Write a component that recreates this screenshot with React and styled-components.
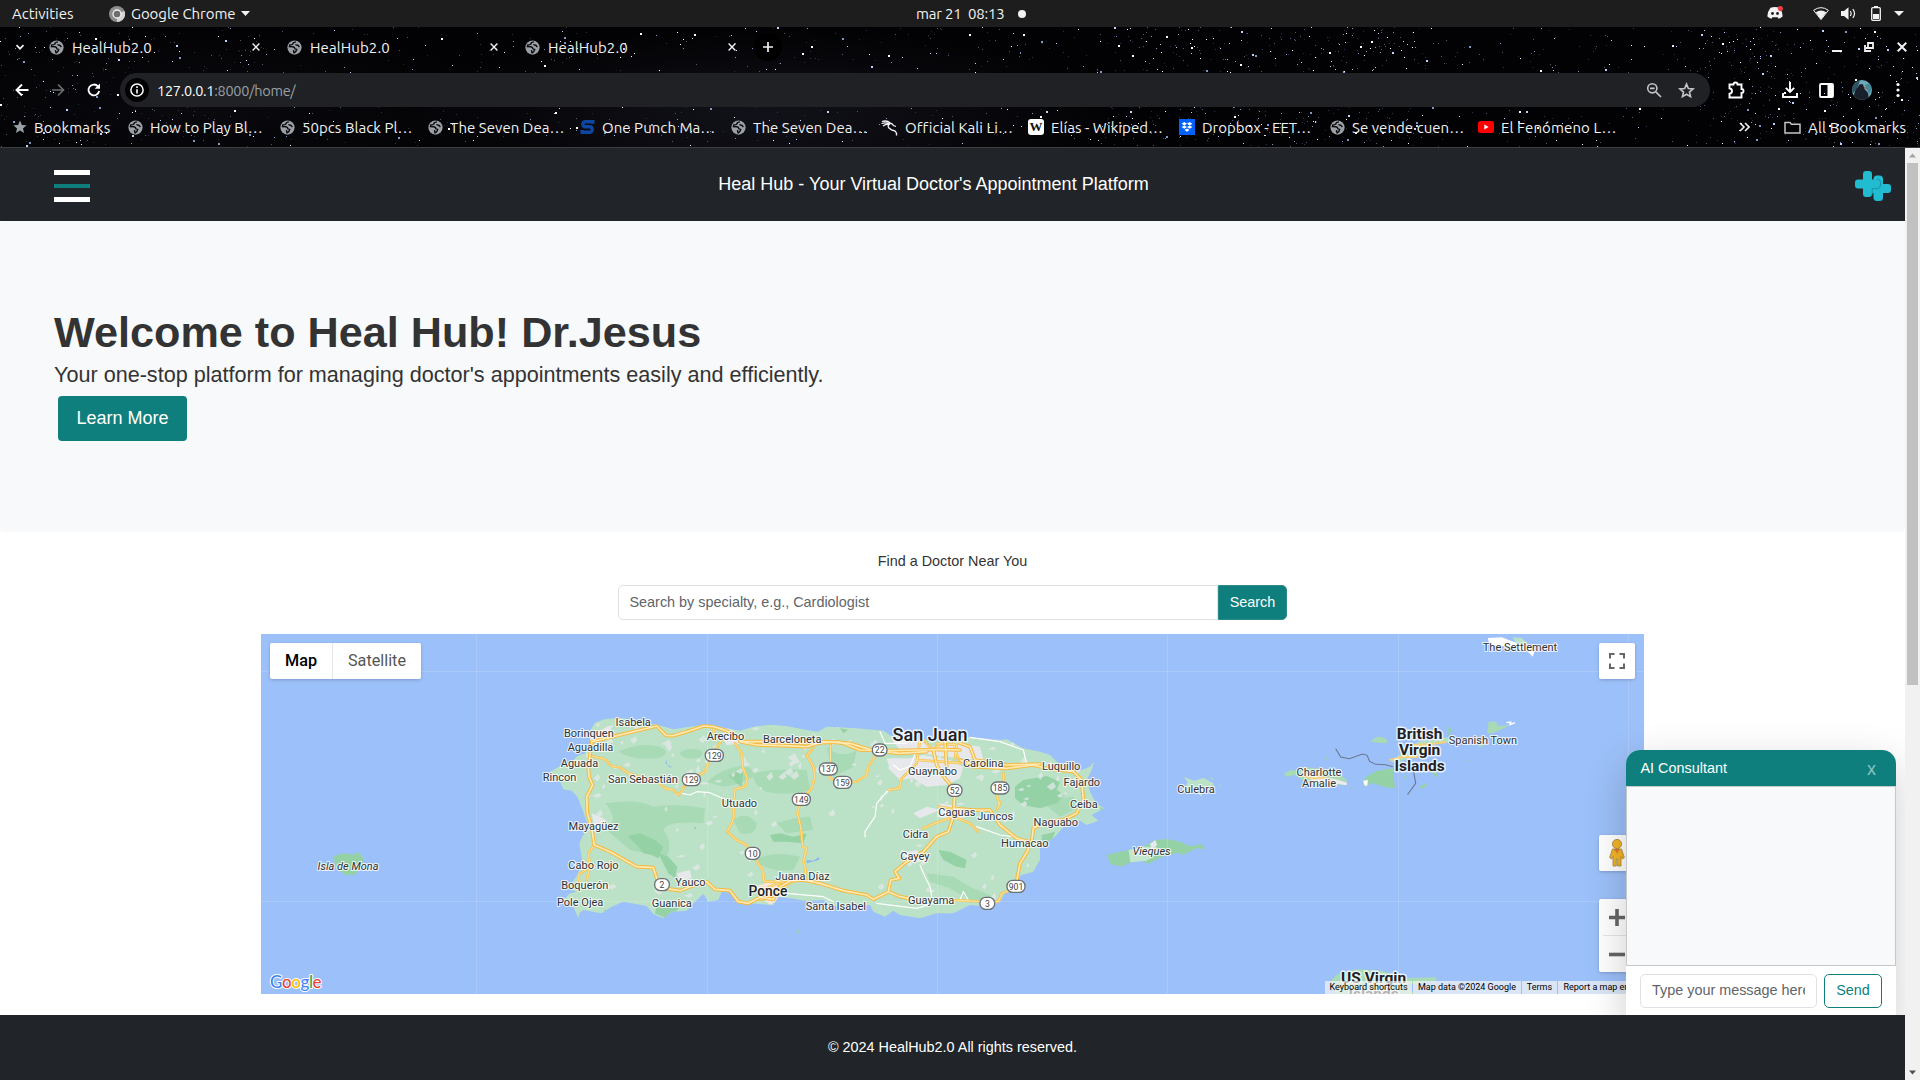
import React from 'react';
import styled, { createGlobalStyle, css } from 'styled-components';

const GlobalStyle = createGlobalStyle`
  * { box-sizing: border-box; }
  html, body { margin: 0; padding: 0; background: #fff; overflow: hidden; }
  body { font-family: "Liberation Sans", Arial, sans-serif; font-size: 14.4px; color: #212529; }
  p, h1, h2 { margin: 0; }
`;

const uiFont = '"Ubuntu", "Noto Sans", "Open Sans", sans-serif';
const teal = '#0f7f7e';

/* ---------- seeded random, for the star field and land texture ---------- */
function makeRandom(seed) {
  let s = seed;
  return () => {
    s = (s * 1664525 + 1013904223) % 4294967296;
    return s / 4294967296;
  };
}

/* ---------- shell ---------- */
const Screen = styled.div`
  width: 1920px;
  height: 1080px;
  display: flex;
  flex-direction: column;
  overflow: hidden;
`;

const SystemBar = styled.div`
  height: 27px;
  flex: none;
  background: #1d1d1d;
  color: #f2f2f2;
  font: 15px ${uiFont};
  display: grid;
  grid-template-columns: 916px 1fr auto;
  align-items: center;
`;
const SystemLeft = styled.div`
  display: flex;
  align-items: center;
  padding-left: 12px;
`;
const Activities = styled.span`
  width: 97px;
`;
const AppName = styled.span`
  margin-left: 6px;
  width: 110px;
  white-space: nowrap;
  letter-spacing: -0.05px;
`;
const Clock = styled.div`
  display: flex;
  align-items: center;
  white-space: pre;
  letter-spacing: -0.2px;
`;
const ClockText = styled.span`
  width: 102px;
`;
const Dot = styled.span`
  width: 8px;
  height: 8px;
  border-radius: 50%;
  background: #f2f2f2;
`;
const Tray = styled.div`
  display: flex;
  align-items: center;
  padding: 0 16px 1px 0;
`;
const TrayIcon = styled.svg`
  display: block;
  margin-right: ${(p) => p.$gap || 0}px;
`;

const Chrome = styled.header`
  position: relative;
  height: 121px;
  flex: none;
  background: #020204;
  border-bottom: 1px solid #3c3d40;
  color: #f1f1f1;
  font: 15px ${uiFont};
`;
const Sky = styled.svg`
  position: absolute;
  inset: 0;
`;
const ChromeRows = styled.div`
  position: relative;
  display: flex;
  flex-direction: column;
`;
const TabRow = styled.div`
  height: 46px;
  padding: 0 13px 6px 13px;
  display: flex;
  align-items: center;
`;
const Tab = styled.div`
  width: ${(p) => (p.$last ? 229 : 238)}px;
  display: flex;
  align-items: center;
`;
const TabTitle = styled.span`
  margin-left: 8px;
  width: 180px;
  letter-spacing: 0.1px;
`;
const NewTab = styled.div`
  width: 28px;
  height: 28px;
  border-radius: 50%;
  background: #000;
  display: flex;
  align-items: center;
  justify-content: center;
`;
const Grow = styled.div`
  flex: 1;
`;
const Icon = styled.svg`
  display: block;
  flex: none;
  margin-right: ${(p) => p.$gap || 0}px;
`;
const ToolRow = styled.div`
  height: 34px;
  display: flex;
  align-items: center;
  padding: 0 16px 0 14px;
`;
const Omnibox = styled.div`
  width: 1590px;
  height: 34px;
  border-radius: 17px;
  background: #202124;
  display: flex;
  align-items: center;
  padding: 0 15px 0 5px;
`;
const InfoBadge = styled.div`
  width: 24px;
  height: 24px;
  border-radius: 50%;
  background: #020203;
  display: flex;
  align-items: center;
  justify-content: center;
  margin-right: 8px;
`;
const Url = styled.span`
  color: #9aa0a6;
  font-size: 14.5px;
  letter-spacing: -0.28px;
  flex: 1;
  b { font-weight: 400; color: #fff; }
`;
const BookmarkRow = styled.div`
  height: 40px;
  display: flex;
  align-items: center;
  padding-left: 13px;
`;
const Bookmark = styled.div`
  width: ${(p) => p.$w}px;
  display: flex;
  align-items: center;
  white-space: nowrap;
  letter-spacing: ${(p) => p.$ls || 0}px;
  gap: 7px;
`;

/* ---------- page ---------- */
const Viewport = styled.div`
  flex: 1;
  display: flex;
  min-height: 0;
`;
const Page = styled.div`
  position: relative;
  width: 1905px;
  display: flex;
  flex-direction: column;
  overflow: hidden;
`;
const NavBar = styled.nav`
  height: 73px;
  flex: none;
  background: #212529;
  display: grid;
  grid-template-columns: 54px 36px 1fr 36px 14px;
  align-items: center;
`;
const Burger = styled.div`
  grid-column: 2;
  display: flex;
  flex-direction: column;
  gap: 9px;
  padding-top: 2px;
`;
const BurgerLine = styled.span`
  height: ${(p) => (p.$accent ? 4 : 5)}px;
  background: ${(p) => (p.$accent ? teal : '#fff')};
`;
const NavTitle = styled.div`
  color: #fff;
  font-size: 18px;
  text-align: center;
  padding-right: 78px;
`;
const NavLogo = styled.svg`
  display: block;
  margin-top: 2px;
`;
const Hero = styled.section`
  height: 311px;
  flex: none;
  background: #f8f9fb;
  border-radius: 4px;
  display: flex;
  flex-direction: column;
  align-items: flex-start;
  padding: 85px 54px 0;
  color: #333;
`;
const HeroTitle = styled.h1`
  font-size: 43.2px;
  font-weight: 700;
  line-height: 52px;
`;
const HeroText = styled.p`
  font-size: 21.6px;
  line-height: 32px;
  padding-top: 1px;
`;
const LearnMore = styled.button`
  margin: 5px 0 0 4px;
  width: 129px;
  height: 45px;
  border: 0;
  border-radius: 4px;
  background: ${teal};
  color: #fff;
  font: 18px "Liberation Sans", Arial, sans-serif;
  padding: 0;
`;
const Finder = styled.section`
  flex: 1;
  display: flex;
  flex-direction: column;
  align-items: center;
`;
const FinderTitle = styled.h2`
  font-size: 14.4px;
  font-weight: 400;
  color: #333;
  line-height: 22px;
  margin-top: 18px;
`;
const SearchGroup = styled.div`
  display: flex;
  margin-top: 13px;
`;
const fieldBase = css`
  border: 1px solid #dee2e6;
  background: #fff;
  color: #212529;
  font: 14.4px "Liberation Sans", Arial, sans-serif;
  &::placeholder { color: #5f646a; opacity: 1; }
`;
const SearchInput = styled.input`
  ${fieldBase}
  width: 600px;
  height: 35px;
  border-radius: 5px 0 0 5px;
  padding: 0 10px 2px 10.5px;
`;
const SearchButton = styled.button`
  width: 69px;
  height: 35px;
  border: 1px solid #2b8b8a;
  border-radius: 0 5px 5px 0;
  background: ${teal};
  color: #fff;
  font: 14.4px "Liberation Sans", Arial, sans-serif;
  padding: 0 0 2px;
`;
const MapBox = styled.div`
  position: relative;
  margin-top: 14px;
  width: 1383px;
  height: 360px;
  overflow: hidden;
  background: #9cc0f9;
  font-family: Roboto, sans-serif;
`;
const MapArt = styled.svg`
  display: block;
`;
const control = css`
  position: absolute;
  background: #fff;
  border-radius: 2px;
  box-shadow: 0 1px 4px -1px rgba(0, 0, 0, 0.3);
`;
const TypeSwitch = styled.div`
  ${control}
  left: 9px;
  top: 9px;
  height: 36px;
  display: flex;
`;
const TypeOption = styled.div`
  width: ${(p) => p.$w}px;
  display: flex;
  align-items: center;
  justify-content: center;
  padding-bottom: 1px;
  font-size: 16.2px;
  color: ${(p) => (p.$on ? '#000' : '#565656')};
  font-weight: ${(p) => (p.$on ? 500 : 400)};
  border-right: ${(p) => (p.$on ? '1px solid #e6e6e6' : '0')};
`;
const MapButton = styled.div`
  ${control}
  right: 9px;
  top: ${(p) => p.$top}px;
  width: 36px;
  height: ${(p) => p.$h || 36}px;
  display: flex;
  flex-direction: column;
  align-items: center;
  justify-content: center;
`;
const ZoomHalf = styled.div`
  height: 36px;
  display: flex;
  align-items: center;
`;
const ZoomDivider = styled.span`
  width: 28px;
  height: 1px;
  background: #e6e6e6;
`;
const Legal = styled.div`
  position: absolute;
  right: 0;
  bottom: 0;
  height: 13px;
  display: flex;
  gap: 1px;
  font-size: 9px;
  line-height: 12px;
  color: #000;
`;
const LegalItem = styled.span`
  width: ${(p) => p.$w}px;
  background: rgba(245, 245, 245, 0.7);
  text-align: center;
  white-space: nowrap;
`;
const Footer = styled.footer`
  position: relative;
  z-index: 2;
  height: 65px;
  flex: none;
  background: #212529;
  color: #fff;
  display: flex;
  align-items: center;
  justify-content: center;
  padding-bottom: 1px;
`;

/* ---------- chat widget ---------- */
const Chat = styled.aside`
  position: absolute;
  z-index: 1;
  right: 9px;
  bottom: 58px;
  width: 270px;
  height: 272px;
  border-radius: 14px 14px 0 0;
  background: #fff;
  box-shadow: 0 14px 43px rgba(0, 0, 0, 0.2);
  display: flex;
  flex-direction: column;
`;
const ChatHead = styled.div`
  height: 36px;
  border-radius: 14px 14px 0 0;
  background: ${teal};
  color: #fff;
  display: flex;
  align-items: center;
  justify-content: space-between;
  padding: 0 20px 0 14.5px;
`;
const ChatClose = styled.span`
  color: #8cc3c3;
  padding-top: 2px;
  font-size: 18px;
`;
const ChatBody = styled.div`
  height: 180px;
  border: 1px solid #c6c8ca;
  background: #f8f9fb;
`;
const ChatForm = styled.div`
  display: flex;
  gap: 7px;
  padding: 8px 14px;
`;
const ChatInput = styled.input`
  ${fieldBase}
  width: 177px;
  height: 34px;
  border-radius: 5px;
  padding: 0 11px 2px;
`;
const SendButton = styled.button`
  width: 58px;
  height: 34px;
  border: 1px solid ${teal};
  border-radius: 5px;
  background: #fff;
  color: ${teal};
  font: 14.4px "Liberation Sans", Arial, sans-serif;
  padding: 0 0 3px;
`;

/* ---------- scrollbar ---------- */
const ScrollTrack = styled.div`
  width: 15px;
  background: #f1f1f1;
  display: flex;
  flex-direction: column;
  align-items: center;
`;
const ScrollThumb = styled.div`
  width: 11px;
  height: 522px;
  background: #c1c1c1;
`;

/* ---------- small icons ---------- */
const Globe = () => (
  <Icon width="15" height="15" viewBox="0 0 16 16">
    <circle cx="8" cy="8" r="7.6" fill="#9aa0a6" />
    <path
      d="M9.500 2Q6 2.600 6.200 4.400Q5.200 5.400 3 5.400L2.600 7L6.400 7.200Q8.400 7.600 8.400 9.400L10.400 10Q10 12.200 7.600 13.800Q6.800 12.600 7 10.800M9.200 4.600Q9.800 6 11.600 5.600L13.200 7.400"
      fill="none" stroke="#0a0a0d" strokeWidth="1.5"
    />
  </Icon>
);
const Cross = ({ size = 8, w = 1.4 }) => (
  <Icon width={size} height={size} viewBox="0 0 8 8">
    <path d="M.6.6 7.4 7.4M7.4.6.6 7.4" stroke="#f1f1f1" strokeWidth={w} />
  </Icon>
);
const StarSolid = () => (
  <Icon width="14" height="14" viewBox="0 0 24 24">
    <path fill="#9aa0a6" d="M12 1l3.2 7.4 8 .7-6.1 5.3 1.9 7.9L12 18l-7 4.300 1.900-7.900L.8 9.100l8-.7z" />
  </Icon>
);
const SiteS = () => (
  <Icon width="15" height="16" viewBox="0 0 14 16">
    <path d="M12.300 4.800V2.800H4.800Q2.400 2.800 2.400 5.200T4.800 7.800H9.200Q11.700 7.800 11.700 10.600T9.200 13.200H1.700V11" fill="none" stroke="#0d47a1" strokeWidth="3.400" />
  </Icon>
);
const Kali = () => (
  <Icon width="17" height="17" viewBox="0 0 17 17">
    <path d="M1 2.500Q6 1 9.500 4.200M.5 4.500Q5 3 8.500 5M2 7Q5 4.600 9 5.200M9 4.300Q11 4 12.500 6.500L15 7.500M9 5Q5.800 6.800 8 9T14 12Q16 13.500 15.500 16.500" fill="none" stroke="#f5f5f5" strokeWidth="1.300" />
  </Icon>
);
const WikiMark = styled.span`
  width: 16px;
  height: 16px;
  flex: none;
  border-radius: 3px;
  background: #fff;
  color: #111;
  font: 700 13px/16px "Liberation Serif", serif;
  text-align: center;
  letter-spacing: 0;
  display: block;
`;
const Dropbox = () => (
  <Icon width="16" height="16" viewBox="0 0 16 16">
    <rect width="16" height="16" fill="#0061fe" />
    <path fill="#fff" d="M5.300 3 8 4.700 5.300 6.400 2.600 4.700zM10.700 3l2.700 1.700-2.700 1.700L8 4.700zM5.300 6.400 8 8.100 5.300 9.800 2.600 8.100zM10.700 6.400l2.700 1.700-2.700 1.700L8 8.100zM8 9.400l2.500 1.600L8 12.700 5.500 11z" />
  </Icon>
);
const YouTube = () => (
  <Icon width="16" height="12" viewBox="0 0 16 12">
    <rect width="16" height="12" rx="2.500" fill="#f00" />
    <path fill="#fff" d="M6.300 3.400v5.200L10.600 6z" />
  </Icon>
);

const bookmarks = [
  { label: 'Bookmarks', icon: <StarSolid />, w: 115, ls: 0.15 },
  { label: 'How to Play Bl…', icon: <Globe />, w: 152, ls: 0.05 },
  { label: '50pcs Black Pl…', icon: <Globe />, w: 148, ls: 0.05 },
  { label: 'The Seven Dea…', icon: <Globe />, w: 152, ls: 0.05 },
  { label: 'One Punch Ma…', icon: <SiteS />, w: 151, ls: 0.05 },
  { label: 'The Seven Dea…', icon: <Globe />, w: 150, ls: 0.05 },
  { label: 'Official Kali Li…', icon: <Kali />, w: 147, ls: 0.05 },
  { label: 'Elías - Wikiped…', icon: <WikiMark>W</WikiMark>, w: 151, ls: 0.05 },
  { label: 'Dropbox - EET…', icon: <Dropbox />, w: 151, ls: 0 },
  { label: 'Se vende cuen…', icon: <Globe />, w: 148, ls: 0.05 },
  { label: 'El Fenómeno L…', icon: <YouTube />, w: 260, ls: 0.1 },
];

/* ---------- star field ---------- */
const stars = (() => {
  const r = makeRandom(77);
  const out = [];
  const tones = ['#ffffff', '#bcd4ff', '#7f98c8', '#4c5878', '#2c3348', '#2c3348', '#4f5b78', '#33363f', '#262a36'];
  const add = (x0, x1, n) => {
    for (let i = 0; i < n; i += 1) {
      const big = r() > 0.92;
      out.push({
        x: Math.floor(x0 + r() * (x1 - x0)),
        y: Math.floor(r() * 120),
        s: big ? 2 : 1,
        c: big ? tones[Math.floor(r() * 3)] : tones[Math.floor(r() * tones.length)],
      });
    }
  };
  add(0, 260, 300);
  add(260, 760, 280);
  add(760, 1100, 240);
  add(1100, 1420, 620);
  add(1420, 1780, 240);
  add(1700, 1920, 300);
  return out;
})();

const StarField = () => (
  <Sky width="1920" height="120" viewBox="0 0 1920 120">
    <defs>
      <radialGradient id="haze">
        <stop offset="0" stopColor="#14141d" stopOpacity=".85" />
        <stop offset="1" stopColor="#14141d" stopOpacity="0" />
      </radialGradient>
    </defs>
    <ellipse cx="760" cy="90" rx="360" ry="90" fill="url(#haze)" />
    <ellipse cx="200" cy="80" rx="320" ry="80" fill="url(#haze)" opacity=".5" />
    {stars.map((s, i) => (
      <rect key={i} x={s.x} y={s.y} width={s.s} height={s.s} fill={s.c} />
    ))}
  </Sky>
);

/* ---------- map ---------- */
const island =
  'M30 215L72 192L90 190L112 168L135 160L152 135L148 95L165 68L195 57L245 54L300 66L350 74L400 88L480 76L520 78L600 92L640 80L690 74L740 78L800 90L835 95L860 80L940 84L1030 92L1060 112L1150 118L1210 125L1260 112L1290 112L1380 120L1400 118L1450 145L1500 155L1530 165L1560 195L1600 215L1625 210L1650 200L1662 185L1655 210L1640 240L1650 275L1668 310L1692 325L1655 345L1675 362L1640 375L1620 362L1580 370L1545 410L1500 440L1500 480L1480 515L1445 525L1400 570L1380 605L1345 620L1290 615L1240 640L1190 640L1140 655L1080 645L1060 632L1035 650L1000 635L990 615L945 615L880 618L850 600L800 603L760 596L715 590L700 615L660 612L620 610L590 600L575 578L545 575L535 600L505 605L490 582L465 605L440 632L395 635L370 655L340 642L320 618L250 605L215 620L185 640L130 630L118 640L115 654L102 625L92 615L70 600L90 580L110 575L72 562L95 548L108 532L128 490L118 430L130 405L145 380L130 335L112 290L95 272L70 268L58 240Z';

const darkPatches = [
  'M235 155Q300 125 360 140Q400 160 350 175Q270 180 235 155',
  'M418 160Q440 140 480 150Q500 165 470 175Q430 180 418 160',
  'M500 245Q540 210 590 200Q640 190 640 230Q600 255 550 260Z',
  'M640 220Q700 205 800 210L810 270Q730 290 680 275Q640 260 640 220',
  'M195 310Q290 295 340 320Q420 310 495 325L490 370Q380 360 370 390Q400 430 380 470L270 450L200 390Q240 360 195 310',
  'M580 360Q620 330 650 370Q650 410 600 400Z',
  'M640 480Q700 450 780 470L760 510Q690 520 640 480',
  'M710 370Q770 350 810 350L820 390L740 400Z',
  'M860 140Q900 180 950 150L940 200L880 230Z',
  'M1500 300L1600 290L1620 320L1560 350Z',
  'M1160 520L1240 530L1290 560L1360 590L1350 605L1290 600L1230 565L1170 545Z',
];
const forest = [
  'M262 408L300 400L345 420L370 440L355 475L335 465L310 460L285 430Z',
  'M355 460L385 470L412 500L405 535L385 520Z',
  'M1425 260L1450 240L1520 228L1560 245L1550 270L1575 285L1550 310L1500 325L1450 315L1425 295Z',
  'M565 225L610 210L605 260L590 250Z',
  'M690 405L720 400L760 410L800 400L790 430L740 425L700 425Z',
  'M1195 450L1230 455L1280 480L1275 505L1250 500L1210 480Z',
  'M1505 405L1545 395L1535 425L1505 420Z',
  'M350 615L400 605L430 615L400 640L378 655L345 640Z',
  'M900 85L925 90L910 100Z',
  'M190 632L215 625L200 640Z',
];
const urban = [
  'M1040 175L1110 175L1150 165L1230 180L1270 200L1260 235L1220 255L1160 260L1120 235L1080 240L1050 210Z',
  'M1050 112L1130 120L1180 140L1260 130L1320 140L1330 180L1260 175L1180 165L1080 150Z',
  'M1200 310L1260 320L1300 345L1240 360L1190 350Z',
  'M1080 460L1130 450L1160 480L1120 490Z',
  'M140 120L200 80L220 75L200 110L170 130Z',
  'M155 340L190 355L200 375L165 390Z',
  'M410 520L450 510L455 535L420 540Z',
  'M1120 340L1160 320L1200 330L1140 355Z',
  'M540 100L600 105L610 130L560 135Z',
];
const roads = [
  'M155 125L210 112L350 78L378 106L400 107L440 95L490 78L520 80L560 92L590 112L610 125L670 125L730 128L840 128L900 126L960 150L1050 152L1140 150L1200 148L1260 150',
  'M600 125L650 135L730 137L800 140L850 125L930 130L1000 152L1080 160L1160 155',
  'M155 130L150 165L145 200L147 230L158 255L140 290L142 340L155 385L163 435L210 455L290 500L340 503L352 540L380 566L420 572L450 560L500 545L525 568L570 572L595 605L625 610L660 592L700 598L720 560L750 543L790 540L840 550L910 572L980 585L1000 598L1045 575L1080 590L1120 598',
  'M1045 575L1052 540L1078 535L1065 515L1100 485L1150 455L1190 410L1225 395L1240 350L1245 270L1215 235L1190 195L1180 150',
  'M1240 325L1300 330L1350 330L1380 375L1430 415L1465 425L1465 450L1440 490L1430 545',
  'M1260 180L1300 200L1400 205L1480 195L1520 205L1600 215L1625 240L1630 300L1610 340L1570 360L1520 365L1480 385L1475 425',
  'M1215 120L1220 200M1260 130L1290 140L1305 180L1400 195L1500 192',
];
const smallRoads = [
  'M155 168L195 178L215 198L240 202L262 218L300 232L360 250L375 265L400 270L415 285L425 275L432 260L454 239L495 215L505 190L525 150L545 120',
  'M520 80L522 100M585 130L605 160L608 200L622 235L615 260L585 268L580 320L582 350L575 370L562 395L590 420L620 435L638 460L655 490L668 510L672 545L720 545L750 550',
  'M820 145L800 165L820 200L825 230L815 265L784 298L772 340L782 380L788 440L800 445L790 485L797 510L795 535',
  'M872 135L870 235L905 250L950 245L980 225L985 200L1005 170L1020 155',
  'M163 435L145 460L150 500L115 525L118 545M150 500L140 540',
  'M1045 270L1078 265L1085 235L1130 190L1135 155L1140 120M1130 180L1200 185L1280 190M1150 120L1180 150L1210 120M1240 130L1255 175M1190 130L1250 135L1245 175',
  'M1195 320L1230 325M1150 385L1185 370L1240 350L1290 370L1315 395M1380 305L1370 330M1390 220L1392 250L1370 285L1378 315M1230 600L1340 605L1375 605L1385 580L1430 565',
  'M670 570L710 550L740 560M660 600L705 590',
];
const whiteRoads = [
  'M425 280L450 285L470 275L510 278L540 292L560 300',
  'M1045 270L1010 310L1005 350L975 395L975 410',
  'M1140 495L1155 530L1170 560L1175 590',
  'M740 580L850 590L880 605M1010 610L1130 625L1180 610L1260 600L1270 575L1285 600',
  'M1290 112L1380 125L1450 150L1460 190M1020 95L1035 130L1100 130M1310 380L1380 405L1420 410',
  'M1130 150L1110 200L1080 210L1060 195',
];

const specks = (() => {
  const r = makeRandom(9);
  return Array.from({ length: 150 }, () => {
    const x = 130 + r() * 1500;
    const y = 70 + (r() < 0.5 ? r() * 220 : r() * 560);
    const a = 6 + r() * 16;
    const b = 4 + r() * 12;
    return `M${x.toFixed(0)} ${y.toFixed(0)}l${a.toFixed(0)} ${(-b).toFixed(0)}l${(a * 0.4).toFixed(0)} ${b.toFixed(0)}l${(-a * 0.7).toFixed(0)} ${(b * 0.8).toFixed(0)}z`;
  }).join('');
})();

const towns = [
  ['Isabela', 278, 76], ['Borinquen', 145, 109], ['Aguadilla', 150, 151], ['Aguada', 117, 200],
  ['Rincon', 57, 240], ['San Sebastián', 307, 248], ['Arecibo', 555, 119], ['Barceloneta', 755, 127],
  ['Utuado', 597, 319], ['Mayagüez', 159, 387], ['Cabo Rojo', 159, 504], ['Boquerón', 133, 564],
  ['Pole Ojea', 119, 617], ['Guanica', 394, 620], ['Yauco', 450, 556], ['Juana Díaz', 786, 537],
  ['Santa Isabel', 886, 628], ['Guaynabo', 1176, 223], ['Carolina', 1328, 199], ['Luquillo', 1562, 207],
  ['Fajardo', 1624, 256], ['Ceiba', 1630, 321], ['Juncos', 1364, 359], ['Naguabo', 1546, 375],
  ['Caguas', 1249, 345], ['Cidra', 1125, 412], ['Cayey', 1123, 478], ['Humacao', 1453, 440],
  ['Guayama', 1172, 609],
];
const shields = [
  ['129', 523, 166], ['129', 454, 239], ['149', 784, 298], ['10', 638, 460], ['2', 366, 554],
  ['22', 1019, 150], ['137', 865, 207], ['159', 908, 247], ['52', 1244, 271], ['185', 1380, 264],
  ['901', 1428, 559], ['3', 1342, 610],
];

const MapLabel = styled.text`
  font-family: Roboto, sans-serif;
  font-size: ${(p) => p.$size || 11}px;
  font-weight: ${(p) => p.$weight || 400};
  font-style: ${(p) => (p.$italic ? 'italic' : 'normal')};
  fill: ${(p) => p.$fill || '#2f3337'};
  stroke: rgba(255, 255, 255, 0.8);
  stroke-width: ${(p) => p.$halo || 2.2}px;
  stroke-linejoin: round;
  paint-order: stroke;
  text-anchor: middle;
`;
const ShieldText = styled.text`
  font-family: Roboto, sans-serif;
  font-size: 26px;
  fill: #444;
  text-anchor: middle;
`;
const LogoText = styled.text`
  font: 500 17px Lato, sans-serif;
  letter-spacing: -0.4px;
  stroke: #fff;
  stroke-width: 2px;
  stroke-linejoin: round;
  paint-order: stroke;
`;

const PuertoRicoMap = () => (
  <MapArt width="1383" height="360" viewBox="261 634 1383 360">
    <defs>
      <clipPath id="land"><path d={island} /></clipPath>
    </defs>
    <g transform="translate(540 700) scale(.33333)">
      <path d={island} fill="#bbe2c6" />
      <g clipPath="url(#land)">
        {darkPatches.map((d) => <path key={d} d={d} fill="#a8dab5" />)}
        {forest.map((d) => <path key={d} d={d} fill="#94d2a5" />)}
        <path d={specks} fill="#e4e8ea" opacity=".75" />
        {urban.map((d) => <path key={d} d={d} fill="#e6e8ec" />)}
        <path d="M640 560L690 545L720 560L730 590L690 615L660 590Z" fill="#f3e6d6" />
      </g>
      <path d="M378 178L382 195L398 202L388 202L377 190ZM462 384l6-4l0 8zM800 480L820 482L838 470L836 480L800 490Z" fill="#8ab4f8" />
      <path d="M768 695L782 686L778 696L770 700Z" fill="#94d2a5" />
      <g fill="none" strokeLinejoin="round" strokeLinecap="round">
        {whiteRoads.map((d) => <path key={d} d={d} stroke="#fff" strokeWidth="3.500" />)}
        {smallRoads.map((d) => <path key={d} d={d} stroke="#f6c453" strokeWidth="8" />)}
        {smallRoads.map((d) => <path key={d} d={d} stroke="#fde3a0" strokeWidth="3" />)}
        {roads.map((d) => <path key={d} d={d} stroke="#f5b93c" strokeWidth="11" />)}
        {roads.map((d) => <path key={d} d={d} stroke="#fde9b4" strokeWidth="5" />)}
      </g>
      {shields.map(([n, x, y]) => {
        const w = n.length === 3 ? 54 : 44;
        return (
          <g key={`${n}${x}`}>
            <rect x={x - w / 2} y={y - 18} width={w} height="36" rx="17" fill="#fff" stroke="#6b7075" strokeWidth="4" />
            <ShieldText x={x} y={y + 10}>{n}</ShieldText>
          </g>
        );
      })}
    </g>

    {/* Mona, Vieques, Culebra and the Virgin Islands */}
    <g transform="translate(260 820) scale(.35714 .33333)">
      <path d="M207 108L235 100L262 104L275 96L288 112L288 135L265 165L240 165L210 145Z" fill="#94d2a5" />
    </g>
    <g transform="translate(1100 620) scale(.35714 .33333)">
      <path d="M18 705L80 690L120 680L155 660L185 657L225 665L250 678L290 673L293 688L270 685L232 706L220 698L190 705L160 718L135 732L120 722L85 727L60 740L30 732Z" fill="#94d2a5" />
      <path d="M80 690L120 680L160 680L150 710L130 722L85 727Z" fill="#c4e6cd" />
      <path d="M140 672L155 660L160 675L145 688Z" fill="#e8eaed" />
      <path d="M0 562L10 566L2 570Z" fill="#94d2a5" />
      <path d="M234 470L262 482L290 474L315 488L322 502L290 510L284 530L265 510L240 500L245 485Z" fill="#bbe2c6" />
      <path d="M308 472L320 478L312 480ZM332 494L342 496L338 500Z" fill="#a8dab5" />
      <path d="M516 460L535 450L560 452L570 440L600 445L660 450L690 480L692 494L660 495L630 504L580 490L545 465L520 470Z" fill="#a8dab5" />
      <path d="M570 462L620 470L660 478L692 488L690 496L655 490L600 486Z" fill="#e8eaed" />
      <path d="M565 468L600 476L625 472L660 490" fill="none" stroke="#f9cf75" strokeWidth="5" />
      <path d="M735 490L745 470L775 452L820 445L826 505L800 502L760 488L745 500Z" fill="#94d2a5" />
      <path d="M737 482L750 480L748 498L740 496Z" fill="#fff" />
      <path d="M758 365Q778 340 803 358L805 370L785 368Z" fill="#a8dab5" />
      <path d="M628 408L640 414L636 420ZM702 500l6 4l-6 4zM1028 420l6 2l-4 5zM896 498L920 488L910 502L898 506ZM975 316L984 330L976 352ZM925 455L945 460L945 475ZM848 465l8 3l-3 12z" fill="#94d2a5" />
      <path d="M815 425L850 395L890 365L975 352L980 366L930 372L900 405L850 420L825 428Z" fill="#b5dfc1" />
      <path d="M812 420L850 410L885 412L890 400L880 375L930 372L970 366" fill="none" stroke="#f9cf75" strokeWidth="6" />
      <path d="M1085 340L1088 305L1108 304L1115 318L1140 316L1160 308L1130 325L1100 340ZM1055 380L1075 365L1070 380Z" fill="#a8dab5" />
      <path d="M1138 308L1150 306L1148 314L1162 308" fill="none" stroke="#fff" strokeWidth="4" />
      <path d="M660 386L674 411L698 416L735 402L748 406L755 424L772 433L800 434L820 440M878 455L884 490L861 524" fill="none" stroke="#6a7690" strokeWidth="3" />
      <path d="M1086 54L1125 52L1150 62L1200 80L1216 96L1212 110L1195 92L1150 80L1090 75Z" fill="#fff" />
      <path d="M1155 52L1180 54L1200 72L1170 76Z" fill="#bbe2c6" />
      <path d="M648 1080L665 1062L720 1048L790 1052L850 1075L943 1072L940 1082L860 1095L880 1122L660 1122Z" fill="#a8dab5" />
    </g>

    <path d="M476.500 634V994M707.500 634V994M937.500 634V994M1167.500 634V994M1398.500 634V994M1628.500 634V994M261 671.500H1644M261 901.500H1644" stroke="#fff" strokeOpacity=".15" />

    {towns.map(([name, x, y]) => (
      <MapLabel key={name} x={540.5 + x / 3} y={700.8 + y / 3}>{name}</MapLabel>
    ))}
    <MapLabel x="768" y="896" $size={13.8} $weight={500} $fill="#202124">Ponce</MapLabel>
    <MapLabel x="930" y="740.500" $size={18} $weight={500} $fill="#202124" $halo={3}>San Juan</MapLabel>
    <MapLabel x="348" y="869.500" $italic>Isla de Mona</MapLabel>
    <MapLabel x="1151.500" y="854.500" $italic>Vieques</MapLabel>
    <MapLabel x="1196" y="792.500">Culebra</MapLabel>
    <MapLabel x="1319" y="775.500">Charlotte</MapLabel>
    <MapLabel x="1319" y="786.500">Amalie</MapLabel>
    <MapLabel x="1483" y="743.500">Spanish Town</MapLabel>
    <MapLabel x="1520" y="650.500">The Settlement</MapLabel>
    <MapLabel x="1419.600" y="738.500" $size={15.5} $weight={700} $fill="#202124" $halo={3}>British</MapLabel>
    <MapLabel x="1419.600" y="754.500" $size={15.500} $weight={700} $fill="#202124" $halo={3}>Virgin</MapLabel>
    <MapLabel x="1419.600" y="770.500" $size={15.500} $weight={700} $fill="#202124" $halo={3}>Islands</MapLabel>
    <MapLabel x="1373.600" y="983" $size={15.500} $weight={700} $fill="#202124" $halo={3}>US Virgin</MapLabel>
    <MapLabel x="1373.600" y="999" $size={15.500} $weight={700} $fill="#202124" $halo={3}>Islands</MapLabel>
    <LogoText x="270" y="988">
      <tspan fill="#4285f4">G</tspan>
      <tspan fill="#ea4335">o</tspan>
      <tspan fill="#fbbc05">o</tspan>
      <tspan fill="#4285f4">g</tspan>
      <tspan fill="#34a853">l</tspan>
      <tspan fill="#ea4335">e</tspan>
    </LogoText>
  </MapArt>
);

export default function App() {
  return (
    <>
      <GlobalStyle />
      <Screen>
        <SystemBar>
          <SystemLeft>
            <Activities>Activities</Activities>
            <Icon width="16" height="16" viewBox="0 0 16 16">
              <circle cx="8" cy="8" r="8" fill="#8d8d8d" />
              <path d="M8 8L15.500 5A8 8 0 0 1 8 16Z" fill="#d4d4d4" />
              <circle cx="8" cy="8" r="4" fill="#6d6d6d" stroke="#f2f2f2" strokeWidth="1.300" />
            </Icon>
            <AppName>Google Chrome</AppName>
            <Icon width="9" height="5" viewBox="0 0 9 5"><path d="M0 0H9L4.500 5Z" fill="#f2f2f2" /></Icon>
          </SystemLeft>
          <Clock>
            <ClockText>mar 21  08:13</ClockText>
            <Dot />
          </Clock>
          <Tray>
            <TrayIcon $gap={30} width="16" height="14" viewBox="0 0 16 14">
              <path d="M3.500 1.800Q8 .3 12.500 1.800Q15.800 6 15.600 10.600Q13.500 12.500 11.500 12.800L10.600 11.200H5.400L4.500 12.800Q2.500 12.500.4 10.600Q.2 6 3.500 1.800Z" fill="#f2f2f2" />
              <circle cx="5.500" cy="7.500" r="1.400" fill="#1d1d1d" />
              <circle cx="10.500" cy="7.500" r="1.400" fill="#1d1d1d" />
              <circle cx="13.300" cy="2.600" r="2.600" fill="#ed4245" />
            </TrayIcon>
            <TrayIcon $gap={12} width="16" height="13" viewBox="0 0 16 13">
              <path d="M.6 3.300Q8-2 15.400 3.300L8 12.600Z" fill="none" stroke="#f2f2f2" strokeWidth="1" />
              <path d="M2.800 5.200Q8 2 13.200 5.200L8 12.400Z" fill="#f2f2f2" />
            </TrayIcon>
            <TrayIcon $gap={15} width="15" height="13" viewBox="0 0 15 13">
              <path d="M0 4H3L7.500.2V12.800L3 9H0Z" fill="#f2f2f2" />
              <path d="M9.300 4Q11 6.500 9.300 9M11.800 2.200Q15.300 6.500 11.800 10.800" fill="none" stroke="#f2f2f2" strokeWidth="1.200" />
            </TrayIcon>
            <TrayIcon $gap={13} width="10" height="15" viewBox="0 0 10 15">
              <path d="M3 0H7V2H3Z" fill="#f2f2f2" />
              <rect x=".7" y="1.700" width="8.600" height="12.600" rx="1" fill="none" stroke="#f2f2f2" strokeWidth="1.300" />
              <rect x="2" y="8" width="6" height="5" fill="#f2f2f2" />
            </TrayIcon>
            <TrayIcon width="10" height="5" viewBox="0 0 10 5"><path d="M0 0H10L5 5Z" fill="#f2f2f2" /></TrayIcon>
          </Tray>
        </SystemBar>

        <Chrome>
          <StarField />
          <ChromeRows>
            <TabRow>
              <Icon $gap={22} width="14" height="8" viewBox="0 0 14 8">
                <path d="M3.500 2.200 7 5.700 10.500 2.200" fill="none" stroke="#f1f1f1" strokeWidth="1.700" />
              </Icon>
              {[0, 1, 2].map((n) => (
                <Tab key={n} $last={n === 2}>
                  <Globe />
                  <TabTitle>HealHub2.0</TabTitle>
                  <Cross />
                </Tab>
              ))}
              <NewTab>
                <Icon width="12" height="12" viewBox="0 0 12 12"><path d="M6 1V11M1 6H11" stroke="#f1f1f1" strokeWidth="1.700" /></Icon>
              </NewTab>
              <Grow />
              <Icon $gap={22} width="10" height="10" viewBox="0 0 10 10"><path d="M0 9H10" stroke="#f1f1f1" strokeWidth="2" /></Icon>
              <Icon $gap={23} width="10" height="10" viewBox="0 0 10 10">
                <path d="M4 1H9V6H4ZM1 3V9H7" fill="none" stroke="#f1f1f1" strokeWidth="1.800" />
              </Icon>
              <Cross size={10} w={1.6} />
            </TabRow>

            <ToolRow>
              <Icon $gap={20} width="16" height="16" viewBox="0 0 16 16"><path d="M14.500 8H3M8 2.500 2.500 8 8 13.500" fill="none" stroke="#fff" strokeWidth="1.900" /></Icon>
              <Icon $gap={20} width="16" height="16" viewBox="0 0 16 16"><path d="M2 8H13M8 2.500 13.500 8 8 13.500" fill="none" stroke="#6c6d70" strokeWidth="1.700" /></Icon>
              <Icon $gap={18} width="16" height="16" viewBox="0 0 16 16">
                <path d="M13.200 9A5.400 5.400 0 1 1 12 4.400" fill="none" stroke="#fff" strokeWidth="1.800" />
                <path d="M14 1.500V6.800H8.700Z" fill="#fff" />
              </Icon>
              <Omnibox>
                <InfoBadge>
                  <Icon width="14" height="14" viewBox="0 0 14 14">
                    <circle cx="7" cy="7" r="6.100" fill="none" stroke="#fff" strokeWidth="1.500" />
                    <path d="M7 3.300V5M7 6.200V10.500" stroke="#fff" strokeWidth="1.600" />
                  </Icon>
                </InfoBadge>
                <Url><b>127.0.0.1</b>:8000/home/</Url>
                <Icon $gap={16} width="16" height="16" viewBox="0 0 16 16">
                  <circle cx="6.300" cy="6.300" r="4.600" fill="none" stroke="#c3c5c8" strokeWidth="1.600" />
                  <path d="M9.800 9.800 15 15M4 6.300H8.600" stroke="#c3c5c8" strokeWidth="1.700" />
                </Icon>
                <Icon width="17" height="17" viewBox="0 0 24 24">
                  <path fill="none" stroke="#c3c5c8" strokeWidth="2.300" d="M12 3l2.600 6.200 6.700.6-5.100 4.400 1.500 6.500L12 17.200l-5.700 3.500 1.500-6.500L2.700 9.800l6.700-.6z" />
                </Icon>
              </Omnibox>
              <Icon $gap={36} width="36" height="18" viewBox="0 0 36 18">
                <path d="M19.500 3.500H23.500Q23.500 1.500 25.500 1.500T27.500 3.500H31.500V8Q33.500 8 33.500 10T31.500 12V16.500H19.500V12.800Q22 12.300 22 10T19.500 7.200Z" fill="none" stroke="#fff" strokeWidth="1.900" />
              </Icon>
              <Icon $gap={20} width="16" height="16" viewBox="0 0 16 16">
                <path d="M8 0V9.500M3.800 5.800 8 10 12.200 5.800M1 11V15H15V11" fill="none" stroke="#fff" strokeWidth="1.900" />
              </Icon>
              <Icon $gap={18} width="16" height="15" viewBox="-1 0 16 15">
                <rect x="1" y="1" width="13" height="13" rx="1" fill="none" stroke="#fff" strokeWidth="1.800" />
                <rect x="8.500" y="1" width="5.500" height="13" fill="#fff" />
              </Icon>
              <Icon $gap={24} width="20" height="20" viewBox="0 0 20 20">
                <defs><clipPath id="face"><circle cx="10" cy="10" r="10" /></clipPath></defs>
                <g clipPath="url(#face)">
                  <rect width="20" height="20" fill="#6fa9b8" />
                  <path d="M0 2L8 0L5 9L0 14Z" fill="#2d5360" />
                  <path d="M13 5L18 3L20 9L17 14Z" fill="#3f8a9c" />
                  <path d="M6 7Q7 3 11 4.500L12.500 9L16 13L17 20H2Q1 12 6 7Z" fill="#17202b" />
                  <path d="M12 7.500L15 8.500" stroke="#b5533c" strokeWidth="1.200" />
                </g>
              </Icon>
              <Icon width="4" height="16" viewBox="0 0 4 16">
                <circle cx="2" cy="2.500" r="1.600" fill="#fff" /><circle cx="2" cy="8" r="1.600" fill="#fff" /><circle cx="2" cy="13.500" r="1.600" fill="#fff" />
              </Icon>
            </ToolRow>

            <BookmarkRow>
              {bookmarks.map((b, i) => (
                <Bookmark key={i} $w={b.w} $ls={b.ls}>
                  {b.icon}
                  <span>{b.label}</span>
                </Bookmark>
              ))}
              <Icon $gap={34} width="12" height="10" viewBox="0 0 12 10">
                <path d="M2 1 6 5 2 9M7 1 11 5 7 9" fill="none" stroke="#f1f1f1" strokeWidth="1.600" />
              </Icon>
              <Bookmark $w={130} $ls={0.15}>
                <Icon width="17" height="13" viewBox="0 0 17 13">
                  <path d="M1 1.500H6L7.500 3.200H16V12H1Z" fill="none" stroke="#c3c5c8" strokeWidth="1.500" />
                </Icon>
                <span>All Bookmarks</span>
              </Bookmark>
            </BookmarkRow>
          </ChromeRows>
        </Chrome>

        <Viewport>
          <Page>
            <NavBar>
              <Burger>
                <BurgerLine />
                <BurgerLine $accent />
                <BurgerLine />
              </Burger>
              <NavTitle>Heal Hub - Your Virtual Doctor's Appointment Platform</NavTitle>
              <NavLogo width="36" height="32" viewBox="0 0 36 32">
                <g fill="#22bcd2">
                  <rect x="18.500" y="5.500" width="9.500" height="25.500" rx="3.500" />
                  <rect x="11" y="14" width="25" height="9" rx="3" />
                </g>
                <g fill="#22bcd2">
                  <rect x="8" y="1" width="9" height="26" rx="3" />
                  <rect x="0" y="9.500" width="25.500" height="9" rx="3" />
                </g>
                <path d="M22 9.300Q25.500 9 25.500 13V15Q25.500 18.500 22 18.700H17.200V25" fill="none" stroke="#178fa3" strokeWidth=".9" />
              </NavLogo>
            </NavBar>

            <Hero>
              <HeroTitle>Welcome to Heal Hub! Dr.Jesus</HeroTitle>
              <HeroText>Your one-stop platform for managing doctor's appointments easily and efficiently.</HeroText>
              <LearnMore>Learn More</LearnMore>
            </Hero>

            <Finder>
              <FinderTitle>Find a Doctor Near You</FinderTitle>
              <SearchGroup>
                <SearchInput placeholder="Search by specialty, e.g., Cardiologist" />
                <SearchButton>Search</SearchButton>
              </SearchGroup>
              <MapBox>
                <PuertoRicoMap />
                <TypeSwitch>
                  <TypeOption $on $w={63}>Map</TypeOption>
                  <TypeOption $w={88}>Satellite</TypeOption>
                </TypeSwitch>
                <MapButton $top={9}>
                  <Icon width="16" height="16" viewBox="0 0 16 16">
                    <path d="M1 5.500V1H5.500M10.500 1H15V5.500M15 10.500V15H10.500M5.500 15H1V10.500" fill="none" stroke="#666" strokeWidth="2" />
                  </Icon>
                </MapButton>
                <MapButton $top={201}>
                  <Icon width="16" height="28" viewBox="0 0 16 28">
                    <path d="M3.500 10H12.500L15.300 18.500L13.500 20L12 17.500V27H8.700V20H7.300V27H4V17.500L2.500 20L.7 18.500Z" fill="#f2b529" stroke="#a3843a" strokeWidth=".8" />
                    <circle cx="8" cy="5" r="4.600" fill="#f2b529" stroke="#a3843a" strokeWidth=".8" />
                    <path d="M5 10H11L8 14.500Z" fill="#dd7a2a" />
                  </Icon>
                </MapButton>
                <MapButton $top={265} $h={73}>
                  <ZoomHalf>
                    <Icon width="16" height="17" viewBox="0 0 16 17"><path d="M0 8.500H16M8 0V17" stroke="#666" strokeWidth="3.600" /></Icon>
                  </ZoomHalf>
                  <ZoomDivider />
                  <ZoomHalf>
                    <Icon width="16" height="17" viewBox="0 0 16 17"><path d="M0 8.500H16" stroke="#666" strokeWidth="3.600" /></Icon>
                  </ZoomHalf>
                </MapButton>
                <Legal>
                  <LegalItem $w={87}>Keyboard shortcuts</LegalItem>
                  <LegalItem $w={108}>Map data ©2024 Google</LegalItem>
                  <LegalItem $w={35}>Terms</LegalItem>
                  <LegalItem $w={86}>Report a map error</LegalItem>
                </Legal>
              </MapBox>
            </Finder>

            <Chat>
              <ChatHead>
                <span>AI Consultant</span>
                <ChatClose>x</ChatClose>
              </ChatHead>
              <ChatBody />
              <ChatForm>
                <ChatInput placeholder="Type your message here..." />
                <SendButton>Send</SendButton>
              </ChatForm>
            </Chat>

            <Footer>© 2024 HealHub2.0 All rights reserved.</Footer>
          </Page>

          <ScrollTrack>
            <Icon width="15" height="15" viewBox="0 0 15 15"><path d="M4 9.500H11L7.500 5.500Z" fill="#a3a3a3" /></Icon>
            <ScrollThumb />
            <Grow />
            <Icon width="15" height="15" viewBox="0 0 15 15"><path d="M4 5.500H11L7.500 9.500Z" fill="#505050" /></Icon>
          </ScrollTrack>
        </Viewport>
      </Screen>
    </>
  );
}
